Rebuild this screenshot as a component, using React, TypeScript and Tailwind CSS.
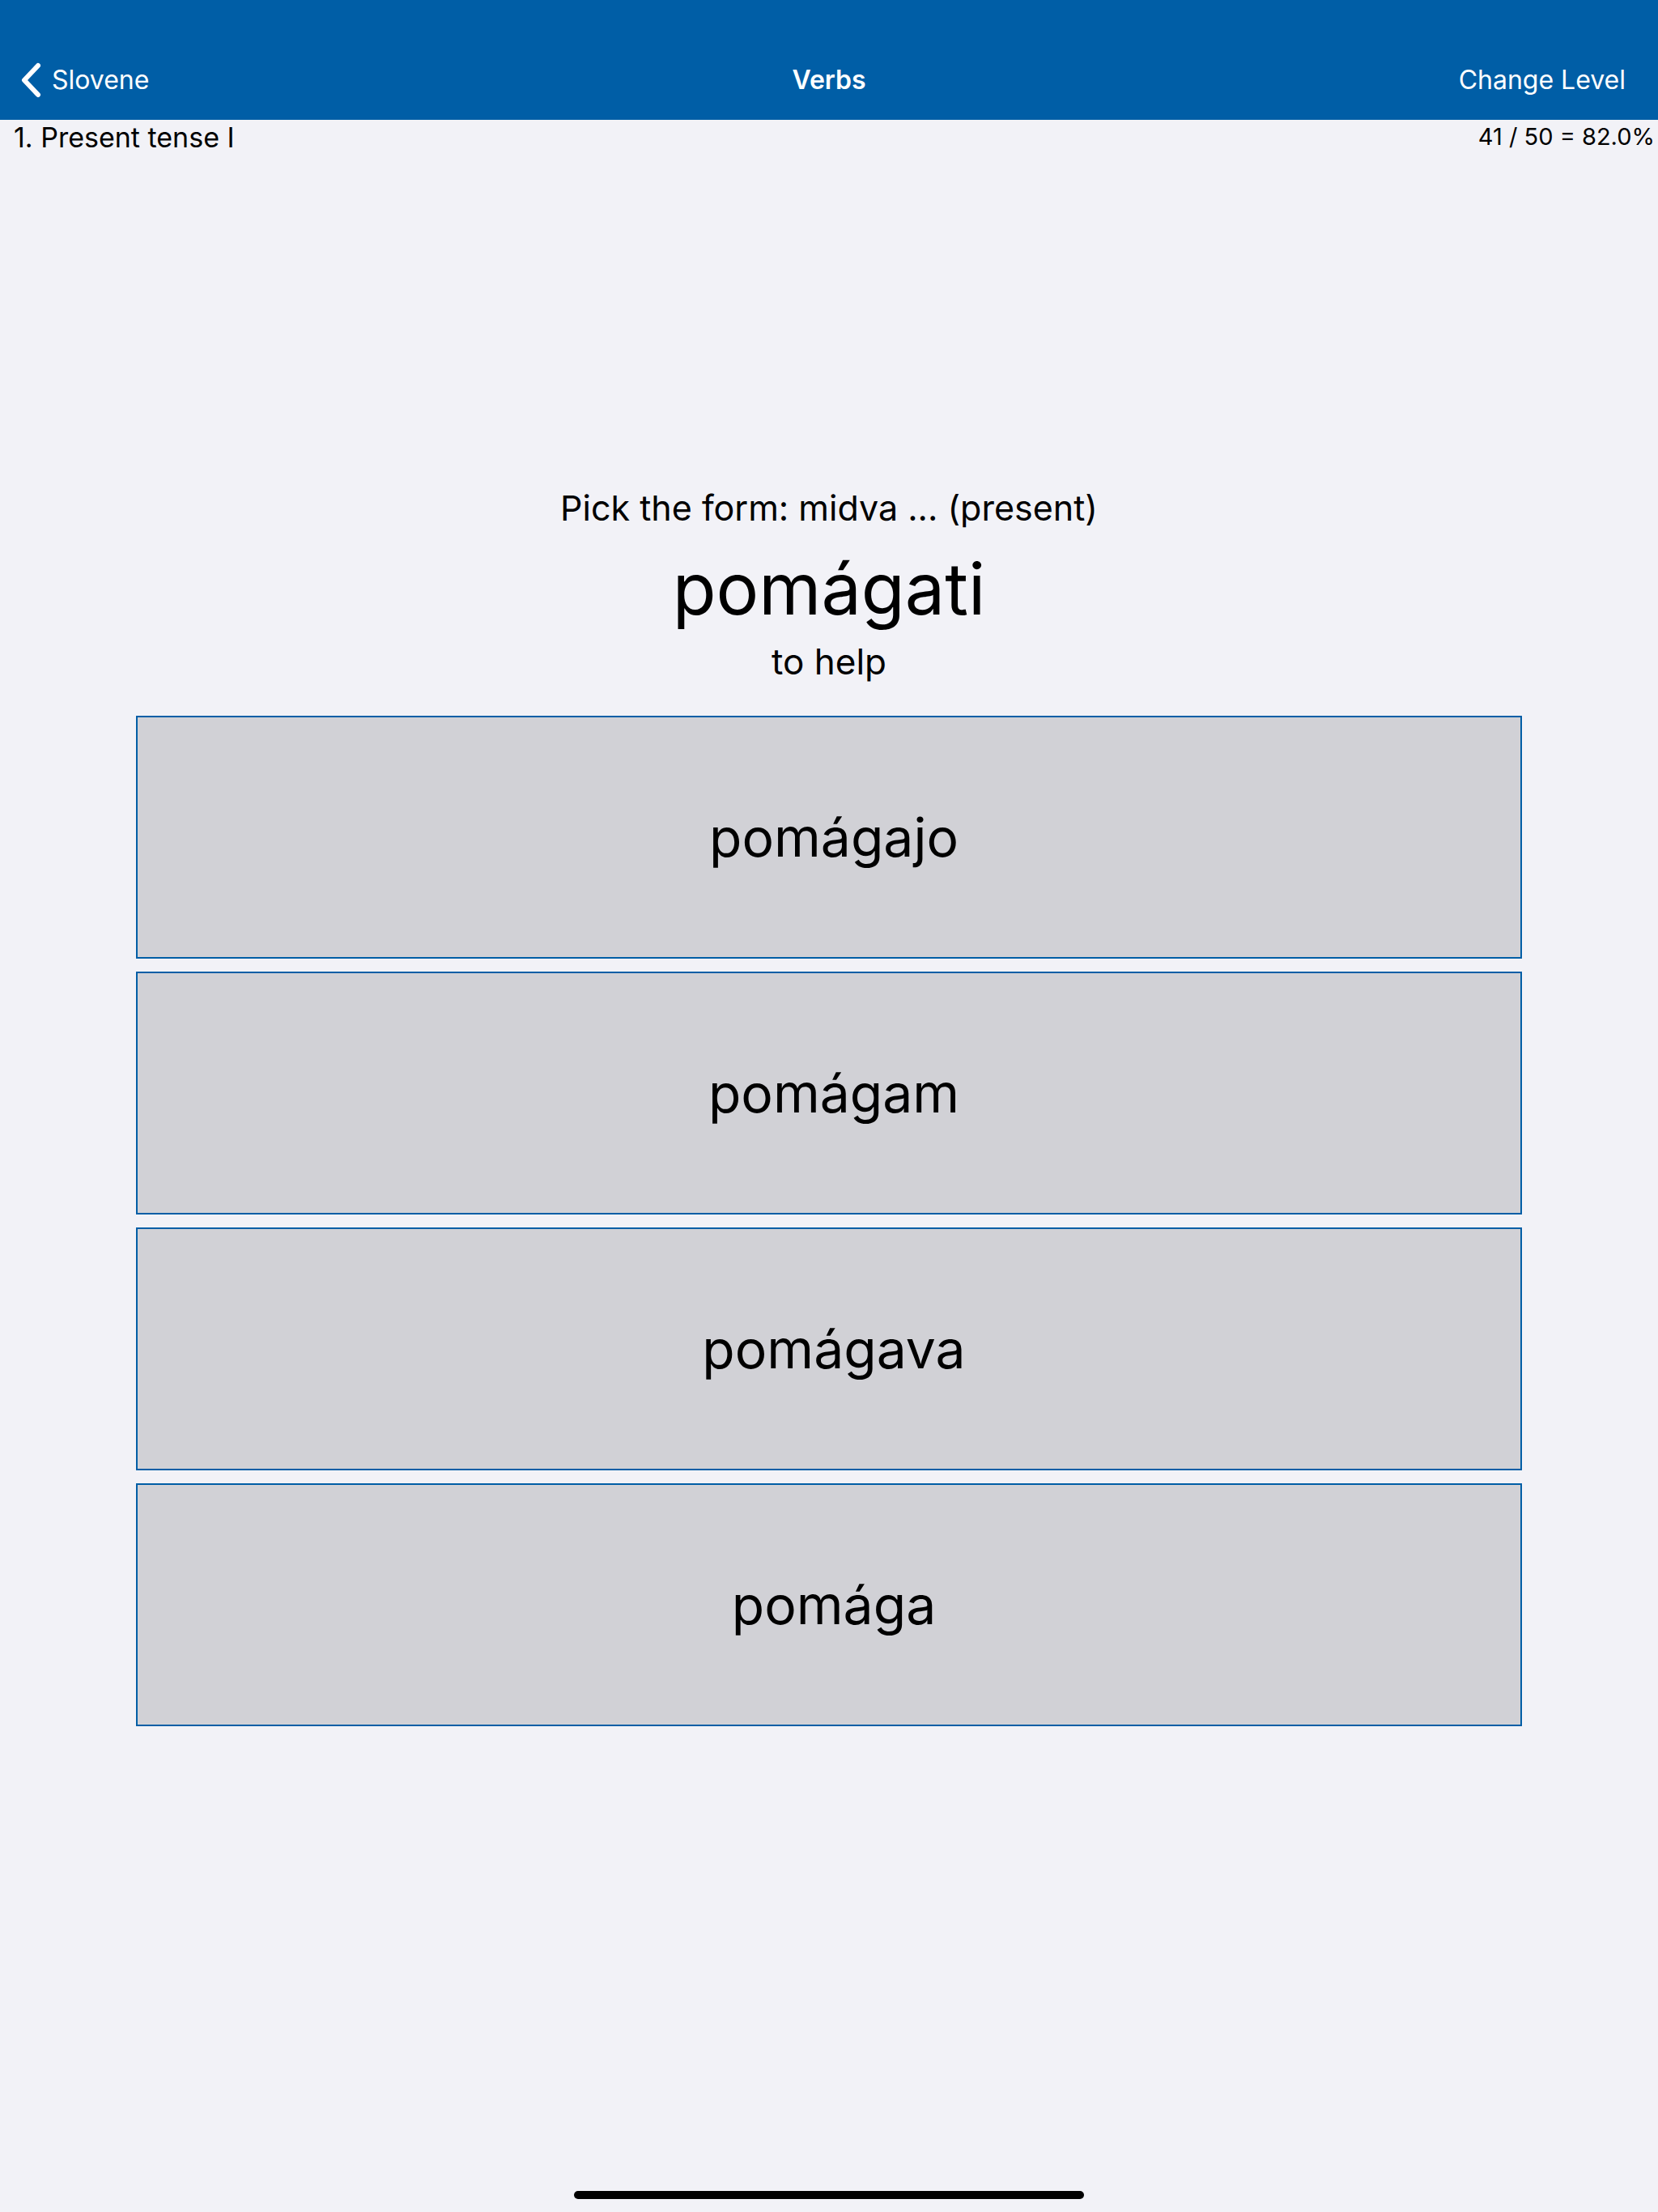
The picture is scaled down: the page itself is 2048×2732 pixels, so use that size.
import * as React from 'react'

const CHOICES = ['pomágajo', 'pomágam', 'pomágava', 'pomága']

const font = { fontFamily: 'Inter, "Noto Sans", sans-serif' }

function BackChevron() {
  return (
    <svg width="28" height="44" viewBox="0 0 28 44" fill="none" className="shrink-0">
      <path d="M23 4 L6 22 L23 40" stroke="white" strokeWidth="6" strokeLinecap="round" strokeLinejoin="round" />
    </svg>
  )
}

function ChoiceButton({ label }: { label: string }) {
  return (
    <button
      type="button"
      className="h-[300px] w-full border-2 border-[#005ea6] bg-[#d1d1d6] flex items-center justify-center pl-3 text-[66px] text-black"
    >
      {label}
    </button>
  )
}

export default function App() {
  return (
    <div className="min-h-[2732px] w-[2048px] bg-[#f2f2f7] flex flex-col" style={font}>
      {/* status bar + nav bar */}
      <header className="bg-[#005ea6] pt-[50px]">
        <div className="h-[98px] grid grid-cols-3 items-center text-white text-[32px]">
          <div className="flex items-center gap-[12px] pl-[24px]">
            <BackChevron />
            <span>Slovene</span>
          </div>
          <div className="text-center font-semibold">Verbs</div>
          <div className="text-right pr-[40px]">Change Level</div>
        </div>
      </header>

      <div className="h-[42px] flex items-center justify-between pl-[17px] pr-[4px] text-black">
        <span className="text-[34px]">1. Present tense I</span>
        <span className="text-[29px]">41 / 50 = 82.0%</span>
      </div>

      <main className="flex flex-col items-center mt-[413px]">
        <div className="text-[43px] leading-[48px] text-black">Pick the form: midva ... (present)</div>
        <div className="mt-[32px] text-[88px] leading-[88px] text-black">pomágati</div>
        <div className="mt-[22px] text-[44px] leading-[48px] text-black">to help</div>

        <div className="mt-[43px] w-[1712px] flex flex-col gap-[16px]">
          {CHOICES.map((c) => (
            <ChoiceButton key={c} label={c} />
          ))}
        </div>
      </main>

      <div className="mt-auto mb-[16px] flex justify-center">
        <div className="h-[10px] w-[630px] rounded-full bg-black" />
      </div>
    </div>
  )
}
